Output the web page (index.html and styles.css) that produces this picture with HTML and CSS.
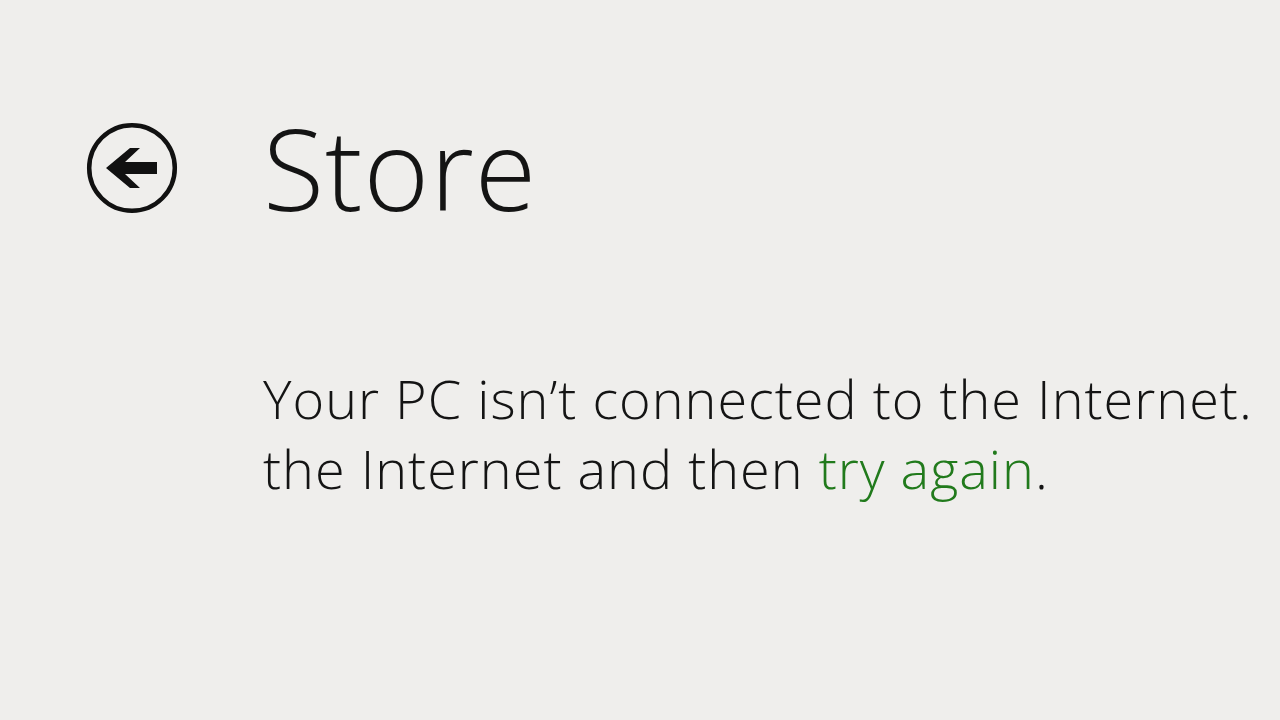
FILE: index.html
```html
<!DOCTYPE html>
<html lang="en">
<head>
  <meta charset="UTF-8">
  <title>Store</title>
  <link rel="stylesheet" href="styles.css">
</head>
<body>
  <header class="page-header">
    <button class="back" aria-label="Back">
      <svg width="92" height="92" viewBox="0 0 92 92">
        <circle cx="46" cy="46" r="42.8" fill="none" stroke="#111" stroke-width="4.5"/>
        <path d="M20 46 L44 26 L54 26 L39 40 L71 40 L71 52 L39 52 L54 66 L44 66 Z" fill="#111"/>
      </svg>
    </button>
    <h1 class="title">Store</h1>
  </header>
  <main class="message">
    <p class="line">Your PC isn’t connected to the Internet.</p>
    <p class="line">the Internet and then <a href="#" class="retry">try again</a>.</p>
  </main>
</body>
</html>
```

FILE: styles.css
```css
* {
  margin: 0;
  padding: 0;
  box-sizing: border-box;
}
html, body {
  height: 100%;
}
body {
  font-family: 'Open Sans', 'Noto Sans', sans-serif;
  background: #efeeec;
  color: #141414;
  overflow: hidden;
}
.page-header {
  display: flex;
  align-items: center;
  padding: 122px 0 0 86px;
}
.back {
  width: 92px;
  height: 92px;
  border: none;
  background: none;
  display: flex;
}
.title {
  font-weight: 300;
  font-size: 112px;
  line-height: 92px;
  margin-left: 85px;
  letter-spacing: 1px;
}
.message {
  padding: 149px 0 0 263px;
}
.line {
  font-weight: 300;
  font-size: 54px;
  line-height: 70px;
  letter-spacing: 1px;
  white-space: nowrap;
}
.retry {
  color: #217a1c;
  text-decoration: none;
}
```
